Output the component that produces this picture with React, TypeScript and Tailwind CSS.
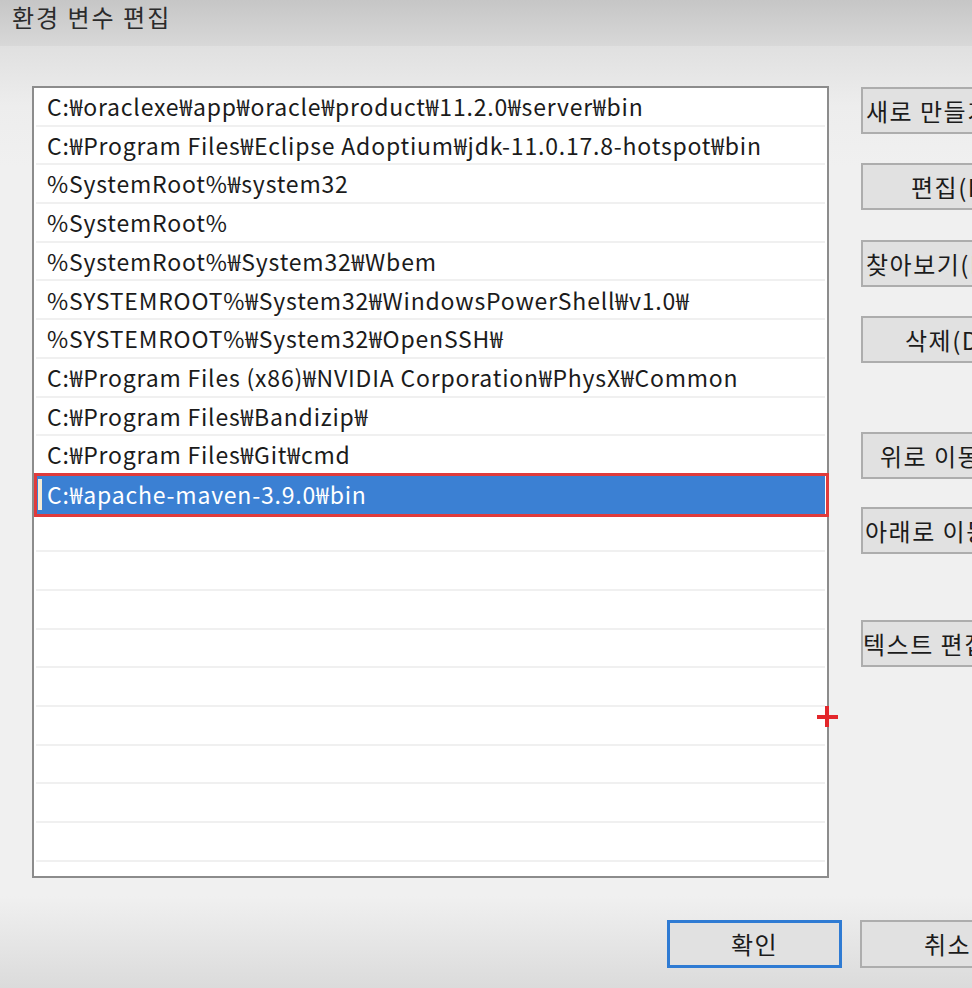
import React from "react";

const rows = [
  "C:₩oraclexe₩app₩oracle₩product₩11.2.0₩server₩bin",
  "C:₩Program Files₩Eclipse Adoptium₩jdk-11.0.17.8-hotspot₩bin",
  "%SystemRoot%₩system32",
  "%SystemRoot%",
  "%SystemRoot%₩System32₩Wbem",
  "%SYSTEMROOT%₩System32₩WindowsPowerShell₩v1.0₩",
  "%SYSTEMROOT%₩System32₩OpenSSH₩",
  "C:₩Program Files (x86)₩NVIDIA Corporation₩PhysX₩Common",
  "C:₩Program Files₩Bandizip₩",
  "C:₩Program Files₩Git₩cmd",
  "C:₩apache-maven-3.9.0₩bin",
];

const EMPTY = 9;

function SideButton({ label, pad, mt }: { label: string; pad: string; mt: string }) {
  return (
    <button
      className={`${mt} ${pad} h-[47px] w-[230px] shrink-0 border-2 border-[#adadad] bg-[#e1e1e1] text-left text-[24px] tracking-[1.5px] leading-none text-[#1b1b1b] whitespace-nowrap`}
    >
      {label}
    </button>
  );
}

export default function App() {
  return (
    <div className="relative flex h-[988px] w-[972px] flex-col overflow-hidden font-['Noto_Sans_CJK_KR',sans-serif] text-[#1b1b1b]">
      <div className="flex h-[46px] shrink-0 items-start bg-[linear-gradient(to_bottom,#c6c6c6,#d8d8d8)] pl-[12px] pt-[2px]">
        <span className="text-[24px] tracking-[2px] leading-[30px] text-[#2b2b2b]">환경 변수 편집</span>
      </div>
      <div className="flex flex-1 flex-col bg-[linear-gradient(to_bottom,#e0e0e0_0px,#ededed_60px,#f0f0f0_120px,#f0f0f0_850px,#dbdbdb_942px)]">
        <div className="flex pl-[32px] pt-[40px]">
          <div className="h-[792px] w-[797px] shrink-0 border-2 border-[#8c8c8c] bg-white px-[2px] pt-0">
            {rows.map((r, i) =>
              i === 10 ? (
                <div key={i} className="relative flex h-[38.7px] items-center bg-[#3b80d3] pl-[11px] text-[23px] tracking-[0.8px] text-white whitespace-nowrap">
                  <span className="absolute left-[2px] top-[4px] bottom-[4px] w-[4px] bg-[#f4ecd6]" />
                  <span className="absolute -left-[2px] -right-[4px] -top-[2px] -bottom-[3px] border-[3px] border-[#e03b3b]" />
                  <span className="relative">{r}</span>
                </div>
              ) : (
                <div key={i} className="flex h-[38.7px] items-center border-b-2 border-[#f0f0f0] pl-[11px] text-[23px] tracking-[0.8px] whitespace-nowrap">
                  {r}
                </div>
              )
            )}
            {Array.from({ length: EMPTY }).map((_, i) => (
              <div key={"e" + i} className="h-[38.7px] border-b-2 border-[#f0f0f0]" />
            ))}
          </div>
          <div className="ml-[32px] flex flex-col">
            <SideButton label="새로 만들기(N)" pad="pl-[3px]" mt="mt-[1px]" />
            <SideButton label="편집(E)" pad="pl-[48px]" mt="mt-[29px]" />
            <SideButton label="찾아보기(B)..." pad="pl-[3px]" mt="mt-[30px]" />
            <SideButton label="삭제(D)" pad="pl-[42px]" mt="mt-[29px]" />
            <SideButton label="위로 이동(U)" pad="pl-[17px]" mt="mt-[69px]" />
            <SideButton label="아래로 이동(O)" pad="pl-[2px]" mt="mt-[28px]" />
            <SideButton label="텍스트 편집(T)..." pad="pl-[0px]" mt="mt-[66px]" />
          </div>
        </div>
        <div className="flex pl-[667px] pt-[42px]">
          <button className="h-[48px] w-[175px] shrink-0 border-[3px] border-[#2f7bd3] bg-[#e1e1e1] text-[24px] tracking-[1.5px] leading-none text-[#1b1b1b]">
            확인
          </button>
          <button className="ml-[18px] h-[48px] w-[175px] shrink-0 border-2 border-[#adadad] bg-[#e1e1e1] text-[24px] tracking-[1.5px] leading-none text-[#1b1b1b]">
            취소
          </button>
        </div>
      </div>
      <div className="pointer-events-none absolute left-[817px] top-[715px] h-[4px] w-[21px] bg-[#e3262b]" />
      <div className="pointer-events-none absolute left-[825px] top-[706px] h-[21px] w-[4px] bg-[#e3262b]" />
    </div>
  );
}
